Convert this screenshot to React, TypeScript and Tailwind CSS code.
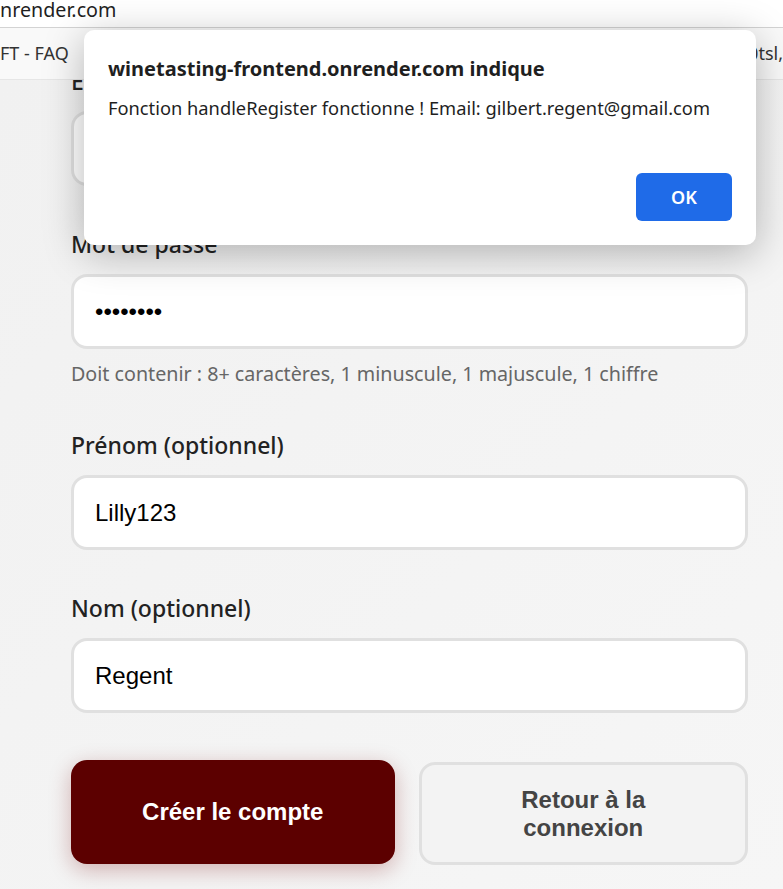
import React from 'react';

const uiFont = { fontFamily: '"Noto Sans", "Open Sans", sans-serif' };

interface FieldProps {
  label: string;
  value: string;
  type?: string;
  hint?: string;
}

function Field({ label, value, type = 'text', hint }: FieldProps) {
  return (
    <div className="mb-[43px]">
      <label
        className="block h-[30px] leading-[30px] text-[23px] font-medium text-[#222] mb-[15px]"
        style={uiFont}
      >
        {label}
      </label>
      <input
        type={type}
        defaultValue={value}
        readOnly
        className="block w-full h-[75px] rounded-[16px] border-[3px] border-[#e0e0e0] bg-white px-[21px] text-[24px] text-black outline-none font-['Liberation_Sans',Arial,sans-serif]"
      />
      {hint && (
        <p className="mt-[11px] leading-[27px] text-[19.7px] text-[#666]" style={uiFont}>
          {hint}
        </p>
      )}
    </div>
  );
}

function App() {
  return (
    <div className="relative w-[783px] h-[889px] overflow-hidden bg-[#f4f4f4]">
      {/* browser chrome */}
      <div className="h-[28px] bg-white border-b border-[#d3d3d3] flex items-center">
        <span className="text-[19.7px] leading-none text-[#1f1f1f] -mt-[8px]" style={uiFont}>
          nrender.com
        </span>
      </div>
      <div className="h-[52px] bg-[#f9f9f9] border-b border-[#e6e6e6] flex items-center justify-between">
        <span className="text-[18px] text-[#333]" style={uiFont}>FT - FAQ</span>
        <span className="text-[18px] text-[#333]" style={uiFont}>0tsl,</span>
      </div>

      {/* page */}
      <div className="h-[809px] overflow-hidden bg-gradient-to-br from-[#f1f1f1] to-[#f6f6f6]">
        <div className="pl-[71px] pr-[35px] -mt-[14px]">
          <Field label="Email" value="gilbert.regent@gmail.com" />
          <Field
            label="Mot de passe"
            value="abcdefgh"
            type="password"
            hint="Doit contenir : 8+ caractères, 1 minuscule, 1 majuscule, 1 chiffre"
          />
          <Field label="Prénom (optionnel)" value="Lilly123" />
          <Field label="Nom (optionnel)" value="Regent" />

          <div className="flex gap-[24px] items-start mt-[47px] font-['Liberation_Sans',Arial,sans-serif]">
            <button className="flex-1 h-[104px] rounded-[16px] bg-[#5c0000] text-white text-[24px] font-bold leading-[28px] px-[40px] shadow-[0_6px_22px_rgba(120,0,0,0.28)]">
              Créer le compte
            </button>
            <button className="flex-1 h-[103px] mt-[2px] rounded-[16px] border-[3px] border-[#e0e0e0] bg-[#f3f3f3] text-[#444] text-[24px] font-bold leading-[28px] px-[40px]">
              Retour à la connexion
            </button>
          </div>
        </div>
      </div>

      {/* alert dialog */}
      <div
        className="absolute left-[84px] top-[30px] w-[672px] h-[215px] rounded-[10px] bg-white shadow-[0_8px_40px_rgba(0,0,0,0.28)] px-[24px] pt-[24px] pb-[24px] flex flex-col"
        style={uiFont}
      >
        <h2 className="text-[20px] leading-[30px] font-bold text-[#1f1f1f]">
          winetasting-frontend.onrender.com indique
        </h2>
        <p className="mt-[12px] text-[18.3px] leading-[24px] text-[#1f1f1f]">
          Fonction handleRegister fonctionne ! Email: gilbert.regent@gmail.com
        </p>
        <div className="mt-auto flex justify-end">
          <button className="w-[96px] h-[48px] rounded-[6px] bg-[#1f6be8] text-white text-[18px] font-semibold">
            OK
          </button>
        </div>
      </div>
    </div>
  );
}

export default App;
